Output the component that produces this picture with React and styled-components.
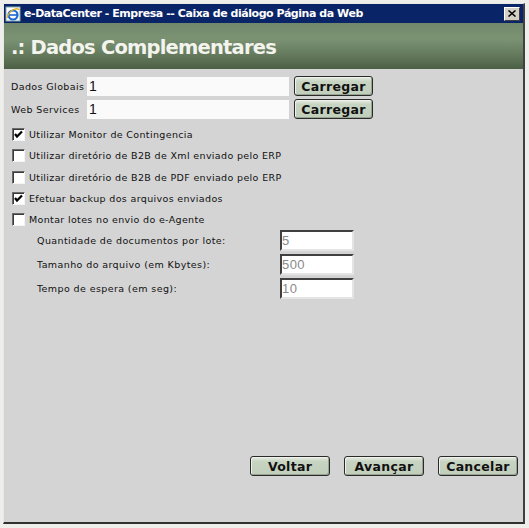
import React from "react";
import styled, { createGlobalStyle } from "styled-components";

const Global = createGlobalStyle`
  html, body { margin: 0; padding: 0; background: #f4f4f0; }
  body { width: 529px; height: 528px; overflow: hidden; }
`;

const Screen = styled.div`
  width: 529px;
  height: 528px;
  display: flex;
  padding: 3px 4px 4px 3px;
  box-sizing: border-box;
  background: #eeeeea;
`;

const Win = styled.div`
  flex: 1;
  display: flex;
  flex-direction: column;
  border-left: 1px solid #e8e8e8;
  border-top: 1px solid #e8e8e8;
  border-right: 2px solid #404040;
  border-bottom: 2px solid #303030;
  background: #d4d4d4;
`;

const TitleBar = styled.div`
  height: 19px;
  background: #0a2468;
  display: flex;
  align-items: center;
  padding: 0 3px 0 1px;
  gap: 3px;
  color: #fff;
  font-family: "DejaVu Sans", Verdana, sans-serif;
  font-weight: bold;
  font-size: 11px;
`;

const TitleText = styled.span`
  flex: 1;
  letter-spacing: -0.45px;
`;

const CloseBtn = styled.div`
  width: 14px;
  height: 12px;
  background: #d4d0c8;
  border: 1px solid;
  border-color: #fff #404040 #404040 #fff;
  display: flex;
  align-items: center;
  justify-content: center;
`;

const Header = styled.div`
  height: 46px;
  background: linear-gradient(#72886a 0%, #7b9273 35%, #64795c 70%, #4b5f45 100%);
  display: flex;
  align-items: center;
  padding: 3px 0 0 7px;
  box-sizing: border-box;
  color: #f4f4ee;
  font-family: "DejaVu Sans", Verdana, sans-serif;
  font-weight: bold;
  font-size: 19.5px;
  letter-spacing: -0.8px;
`;

const Body = styled.div`
  flex: 1;
  display: flex;
  flex-direction: column;
  padding: 7px 0 0 7px;
  font-family: "DejaVu Sans", Verdana, sans-serif;
  font-size: 9.5px;
  color: #111;
`;

const FieldRow = styled.div`
  display: flex;
  align-items: center;
  height: 20px;
  margin-bottom: 3px;
`;

const FieldLabel = styled.span`
  width: 76px;
  letter-spacing: 0.4px;
`;

const TextBox = styled.div`
  width: 202px;
  height: 19px;
  background: #fafafa;
  font-family: "Liberation Sans", Arial, sans-serif;
  font-size: 14px;
  display: flex;
  align-items: center;
  padding-left: 2px;
  box-sizing: border-box;
  margin-right: 5px;
`;

const Btn = styled.button`
  width: ${(p) => p.w || 80}px;
  height: 20px;
  border: 1px solid #2a2a2a;
  border-radius: 3px;
  background: linear-gradient(#e6ece2 0%, #c8d4c2 25%, #c2cebc 100%);
  box-shadow: inset 1px 1px 0 #eef2ea, inset -1px -1px 0 #98a492;
  font-family: "DejaVu Sans", Verdana, sans-serif;
  font-weight: bold;
  font-size: 12.5px;
  letter-spacing: 0.3px;
  color: #111;
  padding: 0;
  display: flex;
  align-items: center;
  justify-content: center;
`;

const Checks = styled.div`
  display: flex;
  flex-direction: column;
  margin-top: 2px;
`;

const CheckRow = styled.div`
  display: flex;
  align-items: center;
  height: 21.25px;
  padding-left: 1px;
  gap: 4px;
  letter-spacing: 0.35px;
`;

const Box = styled.span`
  width: 11px;
  height: 11px;
  background: #fff;
  border: 1px solid;
  border-color: #6a6a6a #f4f4f4 #f4f4f4 #6a6a6a;
  box-shadow: inset 1px 1px 0 #3a3a3a;
  display: flex;
  align-items: center;
  justify-content: center;
`;

const SubRows = styled.div`
  display: flex;
  flex-direction: column;
  padding-left: 26px;
  gap: 3px;
`;

const SubRow = styled.div`
  display: flex;
  align-items: center;
  height: 21px;
  letter-spacing: 0.4px;
`;

const SubLabel = styled.span`
  width: 243px;
`;

const NumBox = styled.div`
  width: 74px;
  height: 21px;
  box-sizing: border-box;
  background: #fff;
  border: 2px solid;
  border-color: #404040 #e4e4e4 #e4e4e4 #404040;
  color: #8a8a8a;
  font-family: "Liberation Sans", Arial, sans-serif;
  font-size: 13px;
  display: flex;
  align-items: center;
`;

const Footer = styled.div`
  margin-top: auto;
  display: flex;
  justify-content: flex-end;
  gap: 14px;
  padding: 0 5px 46px 0;
`;

const Check = () => (
  <svg width="9" height="9" viewBox="0 0 9 9">
    <path d="M1 4 L3 6.5 L8 1.5" fill="none" stroke="#000" strokeWidth="2.2" />
  </svg>
);

const IeIcon = () => (
  <svg width="16" height="16" viewBox="0 0 16 16">
    <rect x="1" y="1" width="14" height="14" fill="#fff" stroke="#8aa" />
    <circle cx="8" cy="9" r="4.5" fill="none" stroke="#1c6ad2" strokeWidth="2.2" />
    <path d="M4 9 H12" stroke="#1c6ad2" strokeWidth="1.6" />
    <path d="M2 12 C5 2 13 2 14 4" fill="none" stroke="#e8b020" strokeWidth="1.3" />
  </svg>
);

const options = [
  ["Utilizar Monitor de Contingencia", true],
  ["Utilizar diretório de B2B de Xml enviado pelo ERP", false],
  ["Utilizar diretório de B2B de PDF enviado pelo ERP", false],
  ["Efetuar backup dos arquivos enviados", true],
  ["Montar lotes no envio do e-Agente", false],
];

const subs = [
  ["Quantidade de documentos por lote:", "5"],
  ["Tamanho do arquivo (em Kbytes):", "500"],
  ["Tempo de espera (em seg):", "10"],
];

export default function App() {
  return (
    <>
      <Global />
      <Screen>
        <Win>
          <TitleBar>
            <IeIcon />
            <TitleText>e-DataCenter - Empresa -- Caixa de diálogo Página da Web</TitleText>
            <CloseBtn>
              <svg width="8" height="7" viewBox="0 0 8 7">
                <path d="M0.5 0.5 L7.5 6.5 M7.5 0.5 L0.5 6.5" stroke="#000" strokeWidth="1.5" />
              </svg>
            </CloseBtn>
          </TitleBar>
          <Header>.: Dados Complementares</Header>
          <Body>
            <FieldRow>
              <FieldLabel>Dados Globais</FieldLabel>
              <TextBox>1</TextBox>
              <Btn w={79}>Carregar</Btn>
            </FieldRow>
            <FieldRow>
              <FieldLabel>Web Services</FieldLabel>
              <TextBox>1</TextBox>
              <Btn w={79}>Carregar</Btn>
            </FieldRow>
            <Checks>
              {options.map(([t, c]) => (
                <CheckRow key={t}>
                  <Box>{c && <Check />}</Box>
                  <span>{t}</span>
                </CheckRow>
              ))}
            </Checks>
            <SubRows>
              {subs.map(([t, v]) => (
                <SubRow key={t}>
                  <SubLabel>{t}</SubLabel>
                  <NumBox>{v}</NumBox>
                </SubRow>
              ))}
            </SubRows>
            <Footer>
              <Btn>Voltar</Btn>
              <Btn>Avançar</Btn>
              <Btn>Cancelar</Btn>
            </Footer>
          </Body>
        </Win>
      </Screen>
    </>
  );
}
